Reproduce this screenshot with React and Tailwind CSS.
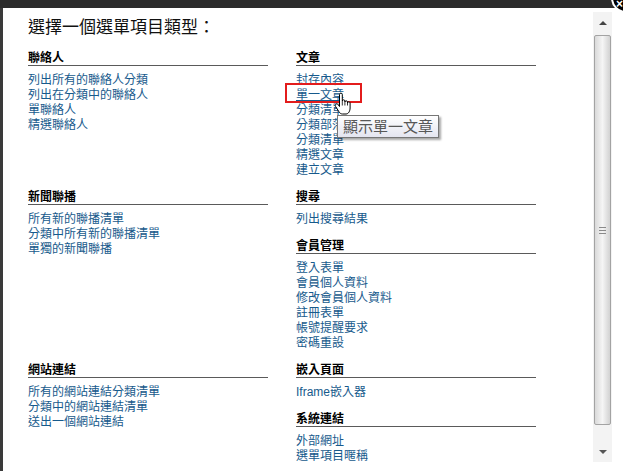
const SECTIONS_LEFT = [
  [{ title: '聯絡人', items: ['列出所有的聯絡人分類', '列出在分類中的聯絡人', '單聯絡人', '精選聯絡人'] }],
  [{ title: '新聞聯播', items: ['所有新的聯播清單', '分類中所有新的聯播清單', '單獨的新聞聯播'] }],
  [{ title: '網站連結', items: ['所有的網站連結分類清單', '分類中的網站連結清單', '送出一個網站連結'] }],
];

const SECTIONS_RIGHT = [
  [{ title: '文章', items: ['封存內容', '單一文章', '分類清單', '分類部落格', '分類清單', '精選文章', '建立文章'] }],
  [
    { title: '搜尋', items: ['列出搜尋結果'] },
    { title: '會員管理', items: ['登入表單', '會員個人資料', '修改會員個人資料', '註冊表單', '帳號提醒要求', '密碼重設'] },
  ],
  [
    { title: '嵌入頁面', items: ['Iframe嵌入器'] },
    { title: '系統連結', items: ['外部網址', '選單項目暱稱'] },
  ],
];

function Section({ title, items }) {
  return (
    <div className="mb-[11px]">
      <h3 className="text-[12px] leading-[13px] pt-[2px] font-bold text-black border-b border-[#5a5a5a]">{title}</h3>
      <ul className="mt-[7px]">
        {items.map((item, i) => (
          <li key={i} className="text-[12px] leading-[15px]">
            <a className={'text-[#175a8c] ' + (item === '單一文章' ? 'underline' : '')}>{item}</a>
          </li>
        ))}
      </ul>
    </div>
  );
}

function Scrollbar() {
  return (
    <div className="mt-[4px] mr-[11px] w-[19px] h-[450px] bg-[#f3f3f3] flex flex-col shrink-0">
      <div className="h-[21px] flex items-center justify-center">
        <div className="w-0 h-0 border-x-[4px] border-x-transparent border-b-[4px] border-b-[#444]" />
      </div>
      <div className="mt-[2px] h-[390px] mx-[1px] rounded-[2px] border border-[#a3a3a3] bg-gradient-to-r from-[#d9d9d9] via-[#f5f5f5] to-[#d2d2d2] flex flex-col items-center justify-center gap-[2px]">
        <div className="w-[7px] h-px bg-[#8a8a8a]" />
        <div className="w-[7px] h-px bg-[#8a8a8a]" />
        <div className="w-[7px] h-px bg-[#8a8a8a]" />
      </div>
      <div className="flex-1 flex items-end">
        <div className="h-[20px] w-full flex items-center justify-center">
          <div className="w-0 h-0 border-x-[4px] border-x-transparent border-t-[4px] border-t-[#555]" />
        </div>
      </div>
    </div>
  );
}

function HandCursor() {
  return (
    <svg className="absolute left-[334px] top-[92px]" width="18" height="25" viewBox="0 0 18 24">
      <path
        d="M5.5 2C5.5 1.2 6.1 0.6 6.9 0.6C7.7 0.6 8.3 1.2 8.3 2V8.5C8.3 7.8 8.9 7.3 9.6 7.3C10.3 7.3 10.9 7.8 10.9 8.5V9.5C10.9 8.8 11.5 8.3 12.2 8.3C12.9 8.3 13.5 8.8 13.5 9.5V10.5C13.5 9.8 14.1 9.3 14.8 9.3C15.5 9.3 16.1 9.8 16.1 10.5V15.5C16.1 18.5 14.5 21.5 12 21.5H8.5C6.8 21.5 5.8 20.5 4.8 19L1.5 13.8C1 13 1.3 12 2 11.6C2.7 11.2 3.6 11.4 4.1 12.1L5.5 14Z"
        fill="#fff"
        stroke="#000"
        strokeWidth="1"
        strokeLinejoin="round"
      />
      <path d="M8.3 8.5V13M10.9 9.5V13M13.5 10.5V13" stroke="#000" strokeWidth="0.8" fill="none" />
    </svg>
  );
}

export default function App() {
  return (
    <div className="relative w-[623px] h-[471px] overflow-hidden bg-white flex flex-col font-['Liberation_Sans','Noto_Sans_CJK_TC',sans-serif]">
      <div className="h-[8px] bg-[#2b2b2b] shrink-0" />
      <div className="flex flex-1 min-h-0">
        <div className="w-[3px] bg-[#3a3a3a] shrink-0" />
        <div className="flex-1 pl-[25px] pt-[8px]">
          <h2 className="text-[17px] leading-[24px] text-[#111] mb-[10px]">選擇一個選單項目類型：</h2>
          <div className="grid grid-cols-[240px_240px] gap-x-[28px]">
            {SECTIONS_LEFT.map((col, r) => [
              <div key={'l' + r}>
                {col.map((s) => (
                  <Section key={s.title} {...s} />
                ))}
              </div>,
              <div key={'r' + r}>
                {SECTIONS_RIGHT[r].map((s) => (
                  <Section key={s.title} {...s} />
                ))}
              </div>,
            ])}
          </div>
        </div>
        <Scrollbar />
      </div>

      {/* close button */}
      <div className="absolute left-[611px] top-[-17px] w-[30px] h-[30px] rounded-full bg-black border-2 border-white flex items-end justify-start pl-[3px] pb-[1px]">
        <span className="text-white text-[12px] leading-none font-bold">×</span>
      </div>

      {/* highlighted item */}
      <div className="absolute left-[285px] top-[83px] w-[77px] h-[20px] border-2 border-[#e31c1c]" />

      {/* tooltip */}
      <div className="absolute left-[337px] top-[115px] w-[102px] h-[23px] border border-[#767676] bg-gradient-to-b from-white to-[#e4e5f0] shadow-[2px_2px_2px_rgba(0,0,0,0.35)] flex items-center pl-[5px]">
        <span className="text-[15px] leading-none text-[#575757]">顯示單一文章</span>
      </div>

      <HandCursor />
    </div>
  );
}
